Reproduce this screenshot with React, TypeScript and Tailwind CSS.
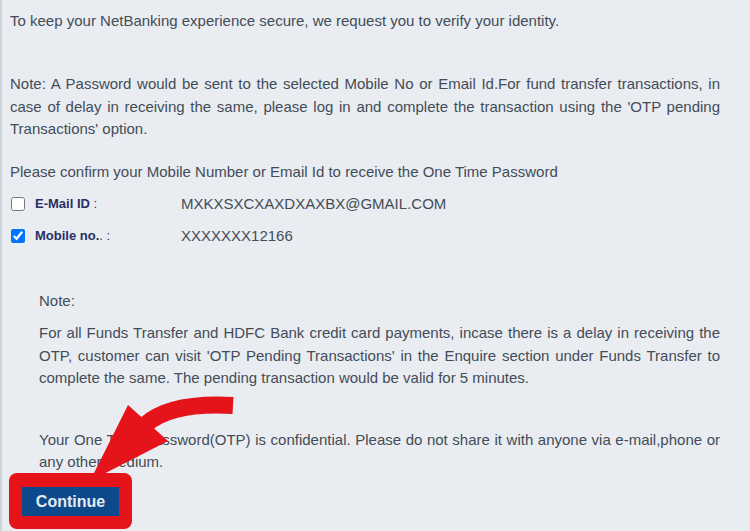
import React from "react"

const textColor = "text-[#434c57]"

const App: React.FC = () => {
    return (
        <div className="relative w-[750px] h-[531px] overflow-hidden bg-[#e9edf2] border-l-2 border-[#cfd4da] font-['Liberation_Sans',Arial,sans-serif]">
            <div className={`pl-[8px] pr-[30px] pt-[9.5px] text-[15px] leading-[22.5px] ${textColor}`}>
                <p>To keep your NetBanking experience secure, we request you to verify your identity.</p>
                <p className="mt-[41px] text-justify">
                    Note: A Password would be sent to the selected Mobile No or Email Id.For fund transfer transactions, in case of delay in receiving the same, please log in and complete the transaction using the 'OTP pending Transactions' option.
                </p>
                <p className="mt-[20px]">Please confirm your Mobile Number or Email Id to receive the One Time Password</p>
                <div className="mt-[10px] flex flex-col gap-[9.5px]">
                    <div className="flex items-center h-[22.5px]">
                        <input type="checkbox" className="w-[14px] h-[14px] ml-[1px]" />
                        <span className="w-[156px] pl-[10px] text-[13px] text-[#272f63]"><b>E-Mail ID</b> :</span>
                        <span>MXKXSXCXAXDXAXBX@GMAIL.COM</span>
                    </div>
                    <div className="flex items-center h-[22.5px]">
                        <input type="checkbox" defaultChecked className="w-[14px] h-[14px] ml-[1px]" />
                        <span className="w-[156px] pl-[10px] text-[13px] text-[#272f63]"><b>Mobile no.</b>. :</span>
                        <span>XXXXXXX12166</span>
                    </div>
                </div>
                <div className="pl-[29px] mt-[42px]">
                    <p>Note:</p>
                    <p className="mt-[10px] text-justify">
                        For all Funds Transfer and HDFC Bank credit card payments, incase there is a delay in receiving the OTP, customer can visit 'OTP Pending Transactions' in the Enquire section under Funds Transfer to complete the same. The pending transaction would be valid for 5 minutes.
                    </p>
                    <p className="mt-[39px] text-justify">
                        Your One Time Password(OTP) is confidential. Please do not share it with anyone via e-mail,phone or any other medium.
                    </p>
                </div>
                <div className="-ml-[1px] mt-[-1px] w-[123px] rounded-lg bg-[#e5141b] pt-[14px] pb-[13px] pl-[13px]">
                    <button className="w-[97px] h-[29px] bg-[#0d4a8b] text-[16px] font-bold text-[#e4ebf3] leading-none pt-[2px]">Continue</button>
                </div>
            </div>
            <svg className="absolute left-0 top-0 pointer-events-none" width="750" height="531" viewBox="0 0 750 531">
                <path d="M231 405.5 Q168 402 143 425" fill="none" stroke="#e5141b" strokeWidth="17" />
                <polygon points="126,405 166,441 88,481" fill="#e5141b" />
            </svg>
        </div>
    )
}

export default App
